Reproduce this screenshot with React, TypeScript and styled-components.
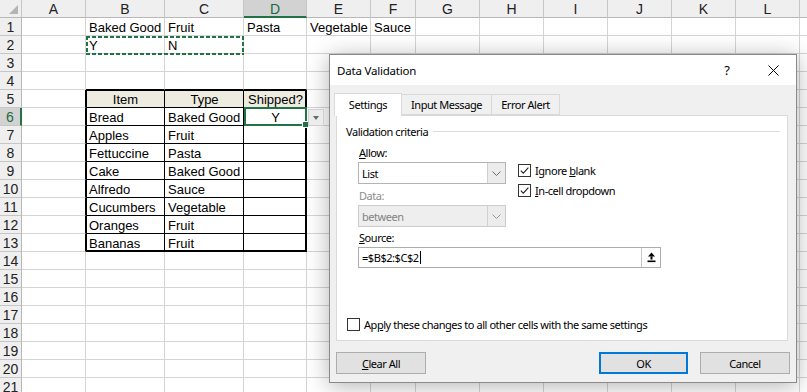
import React from 'react'
import styled, { createGlobalStyle } from 'styled-components'

const GREEN = '#217346'
const GRID = '#d4d4d4'
const HEAD_LINE = '#c6c6c6'

const GlobalStyle = createGlobalStyle`
  html, body {
    margin: 0;
    padding: 0;
    background: #fff;
    overflow: hidden;
  }
`

const columns = ['A', 'B', 'C', 'D', 'E', 'F', 'G', 'H', 'I', 'J', 'K', 'L', 'M']
const widths = [64, 79, 79, 63, 64, 45, 64, 64, 64, 64, 64, 64, 64]
const rowCount = 21

const cells: Record<string, string> = {
  B1: 'Baked Good', C1: 'Fruit', D1: 'Pasta', E1: 'Vegetable', F1: 'Sauce',
  B2: 'Y', C2: 'N',
  B5: 'Item', C5: 'Type', D5: 'Shipped?',
  B6: 'Bread', C6: 'Baked Good', D6: 'Y',
  B7: 'Apples', C7: 'Fruit',
  B8: 'Fettuccine', C8: 'Pasta',
  B9: 'Cake', C9: 'Baked Good',
  B10: 'Alfredo', C10: 'Sauce',
  B11: 'Cucumbers', C11: 'Vegetable',
  B12: 'Oranges', C12: 'Fruit',
  B13: 'Bananas', C13: 'Fruit',
}
const centered = new Set(['B5', 'C5', 'D5', 'D6'])

const Page = styled.div`
  position: relative;
  width: 807px;
  height: 392px;
  overflow: hidden;
`

const Sheet = styled.div`
  display: grid;
  grid-template-columns: 22px ${widths.map((w) => `${w}px`).join(' ')};
  grid-auto-rows: 18px;
  font-family: 'Liberation Sans', Arial, sans-serif;
  font-size: 13px;
  color: #000;
`

const Corner = styled.div`
  position: relative;
  background: #efefef;
  border-right: 1px solid ${HEAD_LINE};
  border-bottom: 1px solid #b8b8b8;
  box-sizing: border-box;

  &::after {
    content: '';
    position: absolute;
    right: 3px;
    bottom: 3px;
    width: 9px;
    height: 9px;
    background: #b4b4b4;
    clip-path: polygon(100% 0, 100% 100%, 0 100%);
  }
`

const ColHead = styled.div<{ $selected?: boolean }>`
  display: flex;
  align-items: center;
  justify-content: center;
  box-sizing: border-box;
  background: ${(p) => (p.$selected ? '#d2d2d2' : '#efefef')};
  color: ${(p) => (p.$selected ? '#1d6a40' : '#222')};
  border-right: 1px solid ${HEAD_LINE};
  border-bottom: ${(p) => (p.$selected ? `2px solid ${GREEN}` : '1px solid #b8b8b8')};
  font-size: 14px;
  padding-top: 1px;
`

const RowHead = styled.div<{ $selected?: boolean }>`
  display: flex;
  align-items: center;
  justify-content: center;
  box-sizing: border-box;
  background: ${(p) => (p.$selected ? '#d2d2d2' : '#efefef')};
  color: ${(p) => (p.$selected ? '#1d6a40' : '#222')};
  border-right: ${(p) => (p.$selected ? `2px solid ${GREEN}` : `1px solid #b8b8b8`)};
  border-bottom: 1px solid ${HEAD_LINE};
  font-family: 'Liberation Sans Narrow', 'Liberation Sans', sans-serif;
  font-size: 14px;
`

const Cell = styled.div<{ $right: string; $bottom: string; $edge: string; $fill?: string; $center?: boolean }>`
  position: relative;
  display: flex;
  align-items: center;
  justify-content: ${(p) => (p.$center ? 'center' : 'flex-start')};
  box-sizing: border-box;
  padding: 1px 2px 0 3px;
  white-space: nowrap;
  background: ${(p) => p.$fill || 'transparent'};
  border-right: 1px solid ${(p) => p.$right};
  border-bottom: 1px solid ${(p) => p.$bottom};
  box-shadow: ${(p) => p.$edge || 'none'};
`

const Selection = styled.div`
  position: absolute;
  z-index: 2;
  left: 0;
  top: -1px;
  right: -1px;
  bottom: -1px;
  border: 2px solid ${GREEN};
  pointer-events: none;
`

const FillHandle = styled.div`
  position: absolute;
  right: -4px;
  bottom: -4px;
  width: 5px;
  height: 5px;
  background: ${GREEN};
  border: 1px solid #fff;
`

const DropButton = styled.div`
  position: absolute;
  z-index: 2;
  left: calc(100% + 2px);
  top: 1px;
  width: 16px;
  height: 17px;
  box-sizing: border-box;
  background: #ececec;
  border: 1px solid #cfcfcf;
  display: flex;
  align-items: center;
  justify-content: center;

  &::after {
    content: '';
    border-left: 3.5px solid transparent;
    border-right: 3.5px solid transparent;
    border-top: 4px solid #6a6a6a;
  }
`

const Marquee = styled.div`
  position: absolute;
  z-index: 2;
  left: 0;
  top: 0;
  width: 158px;
  height: 19px;
  pointer-events: none;
  background:
    repeating-linear-gradient(90deg, ${GREEN} 0 4px, transparent 4px 6px) top left / 100% 2px no-repeat,
    repeating-linear-gradient(90deg, ${GREEN} 0 4px, transparent 4px 6px) bottom left / 100% 2px no-repeat,
    repeating-linear-gradient(180deg, ${GREEN} 0 4px, transparent 4px 6px) top left / 2px 100% no-repeat,
    repeating-linear-gradient(180deg, ${GREEN} 0 4px, transparent 4px 6px) top right / 2px 100% no-repeat;
`

/* ---------- dialog ---------- */

const Dialog = styled.div`
  position: absolute;
  left: 329px;
  top: 54px;
  width: 468px;
  height: 329px;
  box-sizing: border-box;
  border: 1px solid #8a8a8a;
  background: #f0f0f0;
  box-shadow: 0 3px 22px rgba(0, 0, 0, 0.3);
  display: flex;
  flex-direction: column;
  font-family: 'Noto Sans', 'Segoe UI', sans-serif;
  font-size: 11px;
  color: #000;
`

const TitleBar = styled.div`
  height: 30px;
  background: #fff;
  display: flex;
  align-items: center;
  padding-left: 7px;
`

const Title = styled.div`
  flex: 1;
  font-size: 11.5px;
  letter-spacing: -0.2px;
`

const TitleButton = styled.div`
  width: 46px;
  height: 30px;
  display: flex;
  align-items: center;
  justify-content: center;
  font-size: 13px;
`

const Body = styled.div`
  flex: 1;
  display: flex;
  flex-direction: column;
  padding: 8px 6px 8px 6px;
  letter-spacing: -0.45px;
`

const TabStrip = styled.div`
  display: flex;
  align-items: flex-end;
  height: 22px;
  margin-left: -2px;
`

const Tab = styled.div<{ $active?: boolean; $w: number }>`
  position: relative;
  z-index: ${(p) => (p.$active ? 1 : 0)};
  width: ${(p) => p.$w}px;
  height: ${(p) => (p.$active ? 23 : 21)}px;
  margin-bottom: ${(p) => (p.$active ? -1 : 0)}px;
  margin-left: -1px;
  box-sizing: border-box;
  border: 1px solid #d9d9d9;
  border-bottom: ${(p) => (p.$active ? 'none' : '1px solid #d9d9d9')};
  background: ${(p) => (p.$active ? '#fff' : '#f0f0f0')};
  display: flex;
  align-items: center;
  justify-content: center;
  padding-bottom: ${(p) => (p.$active ? 2 : 0)}px;

  &:first-child {
    margin-left: 0;
  }
`

const Panel = styled.div`
  height: 226px;
  margin-right: 2px;
  box-sizing: border-box;
  background: #fff;
  border: 1px solid #d9d9d9;
  display: flex;
  flex-direction: column;
  padding: 7px 7px 9px 9px;
`

const GroupHeader = styled.div`
  display: flex;
  align-items: center;
  height: 16px;
  gap: 5px;
`

const GroupRule = styled.div`
  flex: 1;
  height: 1px;
  background: #dcdcdc;
`

const Criteria = styled.div`
  display: flex;
  gap: 12px;
  margin: 7px 0 0 12px;
`

const Fields = styled.div`
  width: 148px;
  display: flex;
  flex-direction: column;
`

const FieldLabel = styled.div<{ $disabled?: boolean; $gap?: number }>`
  height: 14px;
  line-height: 14px;
  padding-left: 1px;
  margin-top: ${(p) => p.$gap || 0}px;
  margin-bottom: 2px;
  color: ${(p) => (p.$disabled ? '#8c8c8c' : '#000')};
`

const Combo = styled.div<{ $disabled?: boolean }>`
  height: 22px;
  box-sizing: border-box;
  display: flex;
  border: 1px solid ${(p) => (p.$disabled ? '#cccccc' : '#b4b4b4')};
  background: ${(p) => (p.$disabled ? '#eeeeee' : '#fff')};
  color: ${(p) => (p.$disabled ? '#838383' : '#000')};
`

const ComboText = styled.div`
  flex: 1;
  display: flex;
  align-items: center;
  padding-left: 3px;
`

const ComboButton = styled.div`
  width: 17px;
  border-left: 1px solid #d0d0d0;
  background: #ececec;
  display: flex;
  align-items: center;
  justify-content: center;
`

const Checks = styled.div`
  display: flex;
  flex-direction: column;
  gap: 7px;
  margin-top: 18px;
`

const CheckRow = styled.div<{ $push?: boolean }>`
  display: flex;
  align-items: center;
  gap: 4px;
  height: 13px;
  margin-left: ${(p) => (p.$push ? 1 : 0)}px;
`

const Box = styled.div`
  width: 13px;
  height: 13px;
  box-sizing: border-box;
  border: 1px solid #333;
  background: #fff;
  display: flex;
  align-items: center;
  justify-content: center;
`

const SourceBlock = styled.div`
  margin: 4px 0 0 12px;
`

const SourceBox = styled.div`
  width: 303px;
  height: 21px;
  box-sizing: border-box;
  display: flex;
  border: 1px solid #adadad;
  background: #fff;
`

const SourceText = styled.div`
  flex: 1;
  display: flex;
  align-items: center;
  padding-left: 3px;
`

const Caret = styled.span`
  display: inline-block;
  width: 1px;
  height: 13px;
  background: #000;
  margin-left: 1px;
`

const RefButton = styled.div`
  width: 18px;
  border-left: 1px solid #c8c8c8;
  background: #fdfdfd;
  display: flex;
  align-items: center;
  justify-content: center;
`

const Spacer = styled.div`
  flex: 1;
`

const ButtonRow = styled.div`
  display: flex;
  justify-content: space-between;
  margin-top: 11px;
`

const ButtonGroup = styled.div`
  display: flex;
  gap: 12px;
`

const Button = styled.div<{ $default?: boolean; $w: number }>`
  width: ${(p) => p.$w}px;
  height: 22px;
  box-sizing: border-box;
  display: flex;
  align-items: center;
  justify-content: center;
  background: #e1e1e1;
  border: 1px solid ${(p) => (p.$default ? '#0078d7' : '#adadad')};
  box-shadow: ${(p) => (p.$default ? 'inset 0 0 0 1px #0078d7' : 'none')};
`

const Check = ({ checked }: { checked?: boolean }) => (
  <Box>
    {checked && (
      <svg width="11" height="11" viewBox="0 0 11 11">
        <path d="M1.8 5.6 L4.3 8.1 L9.4 2.6" fill="none" stroke="#222" strokeWidth="1.1" />
      </svg>
    )}
  </Box>
)

const Chevron = ({ color }: { color: string }) => (
  <svg width="9" height="5" viewBox="0 0 9 5">
    <path d="M0.5 0.5 L4.5 4.5 L8.5 0.5" fill="none" stroke={color} strokeWidth="1" />
  </svg>
)

const RefIcon = () => (
  <svg width="9" height="11" viewBox="0 0 9 11">
    <path d="M4.5 0.5 L8 4.5 L1 4.5 Z" fill="#000" />
    <rect x="3.5" y="4.5" width="2" height="3" fill="#000" />
    <rect x="0.5" y="8.5" width="8" height="1.6" fill="#000" />
  </svg>
)

const CloseIcon = () => (
  <svg width="11" height="11" viewBox="0 0 11 11">
    <path d="M0.5 0.5 L10.5 10.5 M10.5 0.5 L0.5 10.5" stroke="#000" strokeWidth="1" />
  </svg>
)

const inTable = (r: number, c: number) => r >= 5 && r <= 13 && c >= 1 && c <= 3

function cellBorders(r: number, c: number) {
  const table = inTable(r, c)
  const right = table || (c === 0 && r >= 5 && r <= 13) ? '#000' : GRID
  const bottom = table || (r === 4 && c >= 1 && c <= 3) ? '#000' : GRID
  const edge: string[] = []
  if (table) {
    if (c === 1) edge.push('inset 1px 0 0 #000')
    if (c === 3) edge.push('inset -1px 0 0 #000')
    if (r === 5) edge.push('inset 0 1px 0 #000')
    if (r === 13) edge.push('inset 0 -1px 0 #000')
  }
  return { right, bottom, edge: edge.join(', ') }
}

export default function App() {
  const rows = Array.from({ length: rowCount }, (_, i) => i + 1)

  return (
    <Page>
      <GlobalStyle />
      <Sheet>
        <Corner />
        {columns.map((col) => (
          <ColHead key={col} $selected={col === 'D'}>
            {col === 'M' ? '' : col}
          </ColHead>
        ))}
        {rows.map((r) => (
          <React.Fragment key={r}>
            <RowHead $selected={r === 6}>{r}</RowHead>
            {columns.map((col, c) => {
              const id = `${col}${r}`
              const b = cellBorders(r, c)
              return (
                <Cell
                  key={id}
                  $right={b.right}
                  $bottom={b.bottom}
                  $edge={b.edge}
                  $fill={r === 5 && inTable(r, c) ? '#eeece1' : undefined}
                  $center={centered.has(id)}
                >
                  {cells[id]}
                  {id === 'B2' && <Marquee />}
                  {id === 'D6' && (
                    <>
                      <Selection>
                        <FillHandle />
                      </Selection>
                      <DropButton />
                    </>
                  )}
                </Cell>
              )
            })}
          </React.Fragment>
        ))}
      </Sheet>

      <Dialog>
        <TitleBar>
          <Title>Data Validation</Title>
          <TitleButton>?</TitleButton>
          <TitleButton>
            <CloseIcon />
          </TitleButton>
        </TitleBar>
        <Body>
          <TabStrip>
            <Tab $active $w={68}>Settings</Tab>
            <Tab $w={91}>Input Message</Tab>
            <Tab $w={69}>Error Alert</Tab>
          </TabStrip>
          <Panel>
            <GroupHeader>
              <span>Validation criteria</span>
              <GroupRule />
            </GroupHeader>
            <Criteria>
              <Fields>
                <FieldLabel>
                  <u>A</u>llow:
                </FieldLabel>
                <Combo>
                  <ComboText>List</ComboText>
                  <ComboButton>
                    <Chevron color="#6a6a6a" />
                  </ComboButton>
                </Combo>
                <FieldLabel $disabled $gap={5}>
                  Data:
                </FieldLabel>
                <Combo $disabled>
                  <ComboText>between</ComboText>
                  <ComboButton>
                    <Chevron color="#9a9a9a" />
                  </ComboButton>
                </Combo>
              </Fields>
              <Checks>
                <CheckRow>
                  <Check checked />
                  <span>
                    Ignore <u>b</u>lank
                  </span>
                </CheckRow>
                <CheckRow>
                  <Check checked />
                  <span>
                    <u>I</u>n-cell dropdown
                  </span>
                </CheckRow>
              </Checks>
            </Criteria>
            <SourceBlock>
              <FieldLabel>
                <u>S</u>ource:
              </FieldLabel>
              <SourceBox>
                <SourceText>
                  =$B$2:$C$2
                  <Caret />
                </SourceText>
                <RefButton>
                  <RefIcon />
                </RefButton>
              </SourceBox>
            </SourceBlock>
            <Spacer />
            <CheckRow $push>
              <Check />
              <span>
                Ap<u>p</u>ly these changes to all other cells with the same settings
              </span>
            </CheckRow>
          </Panel>
          <ButtonRow>
            <Button $w={90}>
              <span>
                <u>C</u>lear All
              </span>
            </Button>
            <ButtonGroup>
              <Button $default $w={89}>
                OK
              </Button>
              <Button $w={90}>Cancel</Button>
            </ButtonGroup>
          </ButtonRow>
        </Body>
      </Dialog>
    </Page>
  )
}
